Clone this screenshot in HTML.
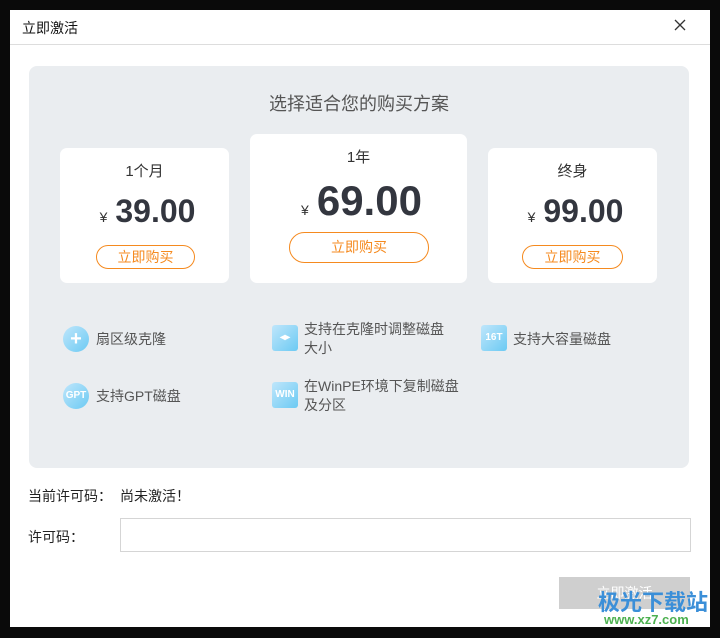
<!DOCTYPE html>
<html><head><meta charset="utf-8"><style>
*{margin:0;padding:0;box-sizing:border-box}
body{width:720px;height:638px;background:#0a0a0a;position:relative;overflow:hidden;font-family:"Liberation Sans","Noto Sans CJK SC",sans-serif;color:#333}
.win{position:absolute;left:10px;top:10px;width:700px;height:617px;background:#fff}
.title{position:absolute;left:12px;top:8px;font-size:14px;color:#111}
.close{position:absolute;left:663px;top:8px;width:14px;height:14px}
.hl{position:absolute;left:0;top:34px;width:700px;height:1px;background:#ddd}
.panel{position:absolute;left:19px;top:56px;width:660px;height:402px;background:#eaedf0;border-radius:8px}
.h{position:absolute;left:0;width:660px;top:24px;text-align:center;font-size:18px;color:#555}
.card{position:absolute;background:#fff;border-radius:7px;text-align:center}
.card .n{font-size:15px;color:#333}
.price{color:#33363f;font-weight:bold;white-space:nowrap}
.price span{font-size:14px;font-weight:normal;color:#333;margin-right:8px}
.btn{position:absolute;border:1px solid #f58a1f;color:#f58a1f;border-radius:14px;text-align:center;font-size:14px}
.f{position:absolute;font-size:14px;color:#555;line-height:19px}
.ic{position:absolute;width:26px;height:26px;border-radius:50%;background:linear-gradient(135deg,#bfe6fb,#6ccaf3);color:#fff;font-size:10px;font-weight:bold;text-align:center;line-height:26px}
.ic.sq{border-radius:3px}
.lbl{position:absolute;font-size:14px;color:#222}
.inp{position:absolute;left:110px;top:508px;width:571px;height:34px;border:1px solid #d5d5d5}
.ab{position:absolute;left:549px;top:567px;width:131px;height:32px;background:#cfcfcf;color:#fff;font-size:14px;text-align:center;line-height:32px}
.wm{position:absolute;left:598px;top:585px;font-size:22px;font-weight:bold;color:#3b8fd8}
.wm2{position:absolute;left:604px;top:612px;font-size:13px;font-weight:bold;color:#4cb04f}
</style></head><body>
<div class="win">
<div class="title">立即激活</div>
<svg class="close" viewBox="0 0 14 14"><path d="M2 2L12 12M12 2L2 12" stroke="#333" stroke-width="1.3"/></svg>
<div class="hl"></div>
<div class="panel">
<div class="h">选择适合您的购买方案</div>
<div class="card" style="left:31px;top:82px;width:169px;height:135px">
<div class="n" style="margin-top:12px">1个月</div>
<div class="price" style="font-size:32px;margin-top:12px;padding-left:6px"><span>¥</span>39.00</div>
<div class="btn" style="left:36px;top:97px;width:99px;height:24px;line-height:22px">立即购买</div>
</div>
<div class="card" style="left:221px;top:68px;width:217px;height:149px">
<div class="n" style="margin-top:12px">1年</div>
<div class="price" style="font-size:42px;margin-top:10px;padding-left:6px"><span>¥</span>69.00</div>
<div class="btn" style="left:39px;top:98px;width:140px;height:31px;line-height:29px;border-radius:16px">立即购买</div>
</div>
<div class="card" style="left:459px;top:82px;width:169px;height:135px">
<div class="n" style="margin-top:12px">终身</div>
<div class="price" style="font-size:32px;margin-top:12px;padding-left:6px"><span>¥</span>99.00</div>
<div class="btn" style="left:34px;top:97px;width:101px;height:24px;line-height:22px">立即购买</div>
</div>
<div class="ic" style="left:34px;top:260px;font-size:20px">+</div>
<div class="f" style="left:67px;top:264px">扇区级克隆</div>
<div class="ic sq" style="left:243px;top:259px">◂▸</div>
<div class="f" style="left:275px;top:254px">支持在克隆时调整磁盘<br>大小</div>
<div class="ic sq" style="left:452px;top:259px">16T</div>
<div class="f" style="left:484px;top:264px">支持大容量磁盘</div>
<div class="ic" style="left:34px;top:317px">GPT</div>
<div class="f" style="left:67px;top:321px">支持GPT磁盘</div>
<div class="ic sq" style="left:243px;top:316px">WIN</div>
<div class="f" style="left:275px;top:311px">在WinPE环境下复制磁盘<br>及分区</div>
</div>
<div class="lbl" style="left:18px;top:476px">当前许可码：</div>
<div class="lbl" style="left:110px;top:476px">尚未激活！</div>
<div class="lbl" style="left:18px;top:517px">许可码：</div>
<div class="inp"></div>
<div class="ab">立即激活</div>
</div>
<div class="wm">极光下载站</div>
<div class="wm2">www.xz7.com</div>
</body></html>
